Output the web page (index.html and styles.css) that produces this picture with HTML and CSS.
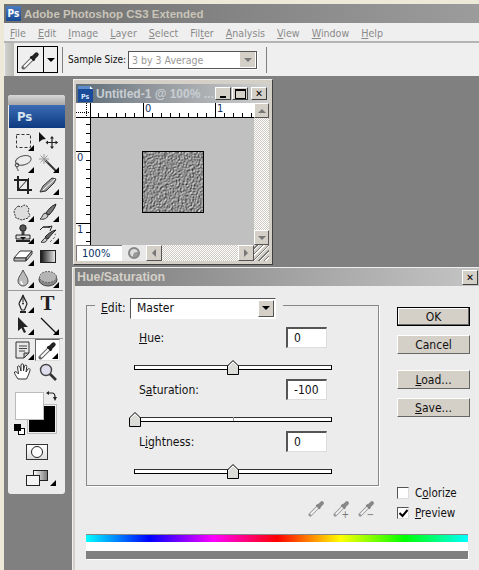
FILE: index.html
```html
<!DOCTYPE html>
<html lang="en">
<head>
<meta charset="utf-8">
<title>Adobe Photoshop CS3 Extended</title>
<link rel="stylesheet" href="styles.css">
</head>
<body>
<svg class="defs" width="0" height="0" aria-hidden="true">
  <defs>
    <symbol id="dropper" viewBox="0 0 20 20">
      <path d="M2.5 17.5L11 9" stroke="#666" stroke-width="4" stroke-linecap="round" fill="none"/>
      <path d="M3 17L11 9" stroke="#fff" stroke-width="2" fill="none"/>
      <path d="M9.5 6.5l4 4" stroke="#111" stroke-width="2.4"/>
      <path d="M12.5 7.5L15.5 4.5" stroke="#222" stroke-width="4.4" stroke-linecap="round"/>
    </symbol>
    <symbol id="dropper-gray" viewBox="0 0 20 20">
      <path d="M2.5 17.5L11 9" stroke="#999" stroke-width="4" stroke-linecap="round" fill="none"/>
      <path d="M3 17L11 9" stroke="#f6f6f6" stroke-width="2" fill="none"/>
      <path d="M9.5 6.5l4 4" stroke="#777" stroke-width="2.4"/>
      <path d="M12.5 7.5L15.5 4.5" stroke="#888" stroke-width="4.4" stroke-linecap="round"/>
    </symbol>
    <symbol id="thumb" viewBox="0 0 12 15">
      <path d="M.5 6L6 .5 11.5 6v8.5H.5z" fill="#dcdcd8" stroke="#000"/>
      <path d="M1.5 6.4L6 2l4.5 4.4" fill="none" stroke="#fff"/>
    </symbol>
  </defs>
</svg>

<div class="top-edge"></div>
<header class="titlebar">
  <span class="ps-icon">Ps</span>
  <span class="app-title">Adobe Photoshop CS3 Extended</span>
</header>
<nav class="menubar">
  <span><u>F</u>ile</span><span><u>E</u>dit</span><span><u>I</u>mage</span><span><u>L</u>ayer</span><span><u>S</u>elect</span><span>Fil<u>t</u>er</span><span><u>A</u>nalysis</span><span><u>V</u>iew</span><span><u>W</u>indow</span><span><u>H</u>elp</span>
</nav>
<div class="optionsbar">
  <div class="grip"></div>
  <div class="tool-preset">
    <span class="preset-icon"><svg width="20" height="20"><use href="#dropper"/></svg></span>
    <span class="preset-arrow"><i class="tri-down"></i></span>
  </div>
  <div class="opt-sep"></div>
  <span class="sample-label">Sample Size:</span>
  <div class="sample-select"><span class="sample-value">3 by 3 Average</span><span class="sample-btn"><i class="tri-down tri-gray"></i></span></div>
  <div class="opt-sep"></div>
</div>

<div class="desk-edge"></div>

<aside class="toolbox">
  <div class="tb-handle"></div>
  <div class="tb-logo">Ps</div>
  <div class="tb-grid">
    <div class="tool more"><svg width="20" height="20" viewBox="0 0 20 20"><rect x="3.500" y="3.500" width="14" height="13" fill="none" stroke="#333" stroke-width="1" stroke-dasharray="3 2"/></svg></div>
    <div class="tool"><svg width="20" height="20" viewBox="0 0 20 20"><path d="M0 0v10l3.500-2.500 3.500-.500z" transform="translate(1 1)" fill="#111"/><path d="M14 6v11M8.500 11.500h11" stroke="#222" stroke-width="1.200"/><path d="M14 5l-2 2.500h4zM14 18l-2-2.500h4zM7.500 11.500l2.500-2v4zM20 11.500l-2.500-2v4z" fill="#222"/></svg></div>
    <div class="tool more"><svg width="20" height="20" viewBox="0 0 20 20"><ellipse cx="10.500" cy="7.500" rx="8" ry="4.500" fill="none" stroke="#555" stroke-width="1" transform="rotate(-15 10 8)"/><circle cx="4" cy="12" r="1.800" fill="none" stroke="#444"/><path d="M4 14c-1 2 2 2 1 4" fill="none" stroke="#444"/></svg></div>
    <div class="tool more"><svg width="20" height="20" viewBox="0 0 20 20"><path d="M7 7L19 19" stroke="#333" stroke-width="2"/><path d="M6 1v10M1 6h10M2.500 2.500l7 7M9.500 2.500l-7 7" stroke="#999"/></svg></div>
    <div class="tool"><svg width="20" height="20" viewBox="0 0 20 20"><path d="M5 1v14h14M1 5h14v14" fill="none" stroke="#222" stroke-width="2"/><path d="M5 15L16 3" stroke="#222"/></svg></div>
    <div class="tool more"><svg width="20" height="20" viewBox="0 0 20 20"><path d="M2 17l3-6 9-8 4 1-2 4-8 8z" fill="#999" stroke="#333"/><path d="M5 15L17 4" stroke="#fff"/></svg></div>
    <div class="tb-sep"></div>
    <div class="tool more"><svg width="20" height="20" viewBox="0 0 20 20"><path d="M5 4l3 1 3-2 3 1 2 3-1 3 2 3-2 3-3 1-3 1-3-1-3-1-1-3-1-3 1-3z" fill="#ddd" stroke="#333" stroke-dasharray="2 1"/></svg></div>
    <div class="tool more"><svg width="20" height="20" viewBox="0 0 20 20"><path d="M18 2C13 4 10 8 8 11l3 2c3-3 6-7 7-11z" fill="#777" stroke="#222"/><path d="M7 11c-3 1-2 4-5 6 4 1 8-1 8-4z" fill="#ccc" stroke="#333"/></svg></div>
    <div class="tool more"><svg width="20" height="20" viewBox="0 0 20 20"><circle cx="10" cy="4" r="3.200" fill="#555" stroke="#222"/><path d="M8.500 7h3v4h-3z" fill="#444"/><path d="M3 11h14v4H3z" fill="#ddd" stroke="#222"/><path d="M3 17h14" stroke="#222" stroke-width="2"/><path d="M7 13h6l-3 3z" fill="#111"/></svg></div>
    <div class="tool more"><svg width="20" height="20" viewBox="0 0 20 20"><path d="M5 3h7" stroke="#222" stroke-width="1.500"/><path d="M10 3l4-1-2 5M5 3l-3 3" fill="none" stroke="#222"/><path d="M18 6C15 9 12 12 10 15l-3-2c3-3 6-6 11-7z" fill="#666" stroke="#222"/><path d="M7 14c-2 1-2 3-4 4 3 1 6 0 6-3z" fill="#ccc" stroke="#333"/><path d="M12 18l2-2M15 15l2-2M17 11l1-2" stroke="#333" stroke-dasharray="1 1"/></svg></div>
    <div class="tool more"><svg width="20" height="20" viewBox="0 0 20 20"><path d="M7 5h12l-6 7H1z" fill="#fff" stroke="#333"/><path d="M1 12h12v3H1zM13 12l6-7v3l-6 7z" fill="#bbb" stroke="#333"/></svg></div>
    <div class="tool"><svg class="grad-icon" width="16" height="13" viewBox="0 0 16 13"><defs><linearGradient id="gr"><stop offset="0" stop-color="#111"/><stop offset="1" stop-color="#eee"/></linearGradient></defs><rect x=".5" y=".5" width="15" height="12" fill="url(#gr)" stroke="#222"/></svg></div>
    <div class="tool more"><svg width="20" height="20" viewBox="0 0 20 20"><path d="M10 2c-2 5-5 7-5 11a5 5 0 0 0 10 0c0-4-3-6-5-11z" fill="#bbb" stroke="#555"/><path d="M8 13a2 3 0 0 0 2 3" stroke="#fff" stroke-width="1.500" fill="none"/></svg></div>
    <div class="tool more"><svg width="20" height="20" viewBox="0 0 20 20"><ellipse cx="10" cy="11.500" rx="9" ry="6.500" fill="#888" stroke="#444"/><ellipse cx="10" cy="9" rx="8.500" ry="5.500" fill="#b4b4b4" stroke="#666" stroke-dasharray="2 1"/></svg></div>
    <div class="tb-sep tb-sep-tight"></div>
    <div class="tool more"><svg width="20" height="20" viewBox="0 0 20 20"><path d="M10 2c-1 4-4 7-4 9l2.500 6h3L14 11c0-2-3-5-4-9z" fill="#eee" stroke="#222" stroke-width="1.200"/><path d="M10 3v6" stroke="#222"/><circle cx="10" cy="10.500" r="1" fill="#222"/><path d="M7 19h6" stroke="#222" stroke-width="2"/></svg></div>
    <div class="tool tool-type">T</div>
    <div class="tool more"><svg width="20" height="20" viewBox="0 0 20 20"><path d="M5 2v14l3.500-3 2.500 5 2-1-2.500-5H15z" fill="#222"/></svg></div>
    <div class="tool more"><svg width="20" height="20" viewBox="0 0 20 20"><path d="M3 3l15 15" stroke="#111" stroke-width="1.200"/></svg></div>
    <div class="tb-sep tb-sep-low"></div>
    <div class="tool more"><svg width="20" height="20" viewBox="0 0 20 20"><path d="M3 2h13v11l-5 5H3z" fill="#e8e8e8" stroke="#333"/><path d="M16 13h-5v5z" fill="#bbb" stroke="#333"/><path d="M6 6h8M6 8.500h8M6 11h6" stroke="#444"/></svg></div>
    <div class="tool more tool-active"><svg width="20" height="20"><use href="#dropper"/></svg></div>
    <div class="tool"><svg width="20" height="20" viewBox="0 0 20 20"><path d="M5 17C3 14 1 11 1.500 10s2.500 0 4 2L4.500 5c0-1.500 2-1.500 2.500 0l1 4V3c0-1.500 2.500-1.500 2.500 0v6l1-5c.5-1.500 2.500-1 2.300.5L13 10l2-3c1-1 2.500 0 2 1.500-1 3-2 6-3.500 8.500z" fill="#fff" stroke="#333"/></svg></div>
    <div class="tool"><svg width="20" height="20" viewBox="0 0 20 20"><circle cx="8" cy="8" r="5.500" fill="#dde" stroke="#444" stroke-width="1.400"/><path d="M12 12l6 6" stroke="#333" stroke-width="2.600"/></svg></div>
  </div>
  <div class="swatches">
    <div class="swatch-bg"></div>
    <div class="swatch-fg"></div>
    <div class="swatch-mini"><i class="mini-w"></i><i class="mini-b"></i></div>
    <svg class="swatch-swap" width="11" height="11" viewBox="0 0 11 11"><path d="M2 2h4c2 0 3 1 3 4" fill="none" stroke="#222" stroke-width="1.200"/><path d="M3 0L0 2l3 2zM7 6h4L9 10z" fill="#222"/></svg>
  </div>
  <div class="mode-btn"><i class="mode-circle"></i></div>
  <div class="screen-btn">
    <svg width="22" height="16" viewBox="0 0 22 16"><defs><linearGradient id="sc" x1="0" x2="1"><stop offset="0" stop-color="#fff"/><stop offset="1" stop-color="#777"/></linearGradient></defs><rect x="7.500" y=".5" width="14" height="10" fill="url(#sc)" stroke="#222"/><rect x=".5" y="5.500" width="13" height="10" fill="#f4f4f4" stroke="#222"/></svg>
  </div>
</aside>

<section class="docwin">
  <div class="doc-title">
    <svg class="doc-icon" width="17" height="18" viewBox="0 0 17 18"><path d="M1 1h12l3 3v13H1z" fill="#1a4a9a"/><path d="M1 1h12v3H1z" fill="#5d8ccc"/><path d="M13 1l3 3h-3z" fill="#fff"/><text x="4" y="14" class="doc-icon-text">Ps</text></svg>
    <span class="doc-name">Untitled-1 @ 100% ...</span>
    <span class="win-btn"><i class="g-min"></i></span>
    <span class="win-btn"><i class="g-max"></i></span>
    <span class="win-btn win-close">✕</span>
  </div>
  <div class="doc-grid">
    <div class="ruler-corner"></div>
    <div class="ruler-h"><span class="r-num rh0">0</span><span class="r-num rh1">1</span></div>
    <div class="scroll-btn"><i class="tri-up"></i></div>
    <div class="ruler-v"><span class="r-num rv0">0</span><span class="r-num rv1">1</span></div>
    <div class="canvas">
      <svg class="noise" width="60" height="60">
        <filter id="nz" x="0" y="0" width="100%" height="100%" color-interpolation-filters="sRGB">
          <feTurbulence type="fractalNoise" baseFrequency="0.85 0.7" numOctaves="2" seed="7" result="t"/>
          <feDiffuseLighting in="t" surfaceScale="1.300" diffuseConstant="1" lighting-color="#fff">
            <feDistantLight azimuth="225" elevation="34"/>
          </feDiffuseLighting>
        </filter>
        <rect width="60" height="60" filter="url(#nz)"/>
      </svg>
    </div>
    <div class="scroll-v-col">
      <div class="dither"></div>
      <div class="scroll-btn"><i class="tri-down tri-gray"></i></div>
    </div>
  </div>
  <div class="doc-status">
    <span class="zoom-field">100%</span>
    <span class="status-icon"><i></i></span>
    <span class="scroll-btn sb-h"><i class="tri-left"></i></span>
    <span class="dither dither-h"></span>
    <span class="scroll-btn sb-h"><i class="tri-right"></i></span>
    <span class="resize-grip"></span>
  </div>
</section>

<section class="dialog">
  <div class="dlg-title"><span class="dlg-name">Hue/Saturation</span><span class="win-btn win-close dlg-close">✕</span></div>
  <div class="dlg-body">
    <div class="dlg-main">
      <div class="dlg-left">
        <div class="group">
          <div class="legend"><span class="legend-label"><u>E</u>dit:</span>
            <div class="select"><span>Master</span><span class="select-btn"><i class="tri-down"></i></span></div>
          </div>
          <div class="adj-row"><span class="adj-label"><u>H</u>ue:</span><span class="field">0</span></div>
          <div class="slider"><div class="track"></div><svg class="thumb thumb-mid" width="12" height="15"><use href="#thumb"/></svg></div>
          <div class="adj-row"><span class="adj-label">S<u>a</u>turation:</span><span class="field">-100</span></div>
          <div class="slider"><div class="track"></div><i class="tick"></i><svg class="thumb thumb-min" width="12" height="15"><use href="#thumb"/></svg></div>
          <div class="adj-row"><span class="adj-label">L<u>i</u>ghtness:</span><span class="field">0</span></div>
          <div class="slider"><div class="track"></div><svg class="thumb thumb-mid" width="12" height="15"><use href="#thumb"/></svg></div>
        </div>
        <div class="droppers">
          <svg width="18" height="18"><use href="#dropper-gray"/></svg>
          <span class="dropper-mod"><svg width="18" height="18"><use href="#dropper-gray"/></svg><b class="mod">+</b></span>
          <span class="dropper-mod"><svg width="18" height="18"><use href="#dropper-gray"/></svg><b class="mod">−</b></span>
        </div>
      </div>
      <div class="dlg-right">
        <div class="btn btn-default">OK</div>
        <div class="btn">Cancel</div>
        <div class="btn btn-gap"><span><u>L</u>oad...</span></div>
        <div class="btn"><span><u>S</u>ave...</span></div>
        <label class="check check-first"><i class="box"></i><span>C<u>o</u>lorize</span></label>
        <label class="check"><i class="box"><svg width="11" height="11" viewBox="0 0 11 11"><path d="M1.500 5l3 3 5-6" fill="none" stroke="#000" stroke-width="2"/></svg></i><span><u>P</u>review</span></label>
      </div>
    </div>
    <div class="spectrum"></div>
    <div class="spectrum-white"></div>
    <div class="spectrum-gray"></div>
  </div>
</section>
</body>
</html>
```

FILE: styles.css
```css
* { box-sizing: border-box; }
html, body { margin: 0; padding: 0; }
body {
  position: relative;
  width: 479px;
  height: 570px;
  overflow: hidden;
  background: #808080;
  font-family: "DejaVu Sans Condensed", "DejaVu Sans", sans-serif;
  font-stretch: condensed;
  font-size: 12px;
  color: #111;
}
i { display: block; font-style: normal; }
u { text-underline-offset: 1px; }
.defs { position: absolute; }

.top-edge { height: 4px; background: #ece9d8; }
.titlebar {
  height: 19px;
  margin-left: 4px;
  display: flex;
  align-items: center;
  gap: 3px;
  background: linear-gradient(90deg, #707070 0%, #7c7c7c 30%, #9c9c9c 100%);
}
.ps-icon {
  width: 15px;
  height: 15px;
  margin-left: 2px;
  background: linear-gradient(#4c7cc0, #164a94);
  color: #fff;
  font-size: 10px;
  line-height: 15px;
  text-align: center;
  font-weight: bold;
}
.app-title {
  color: #c9c5b8;
  font-family: "Liberation Sans", sans-serif;
  font-stretch: normal;
  font-weight: bold;
  font-size: 11.500px;
}
.menubar {
  height: 20px;
  margin-left: 4px;
  padding: 1px 0 0 6px;
  display: flex;
  align-items: center;
  gap: 12px;
  background: #efefef;
  border-bottom: 2px solid #b4b4b4;
  color: #8a8a8a;
  font-size: 10.600px;
}
.optionsbar {
  height: 33px;
  margin-left: 4px;
  display: flex;
  align-items: center;
  background: #efefef;
}
.grip {
  width: 9px;
  height: 33px;
  margin-left: 1px;
  background: linear-gradient(90deg, #d0d0cc, #b8b8b4);
}
.tool-preset {
  display: flex;
  width: 41px;
  height: 27px;
  margin-left: 3px;
  border: 1px solid #000;
  background: #efefef;
}
.preset-icon { width: 26px; display: flex; align-items: center; justify-content: center; border-right: 1px solid #000; }
.preset-arrow { flex: 1; display: flex; align-items: center; justify-content: center; }
.tri-down { width: 0; height: 0; border: 4px solid transparent; border-top-color: #000; border-bottom-width: 0; }
.tri-gray { border-top-color: #777; }
.tri-up { width: 0; height: 0; border: 4px solid transparent; border-bottom-color: #777; border-top-width: 0; }
.tri-left { width: 0; height: 0; border: 4px solid transparent; border-right-color: #777; border-left-width: 0; }
.tri-right { width: 0; height: 0; border: 4px solid transparent; border-left-color: #777; border-right-width: 0; }
.opt-sep { width: 1px; height: 26px; margin-left: 4px; background: #808080; }
.sample-label { margin-left: 5px; width: 55px; font-size: 10px; color: #111; white-space: nowrap; }
.sample-select {
  display: flex;
  align-items: center;
  justify-content: space-between;
  width: 129px;
  height: 18px;
  margin-left: 5px;
  margin-right: 5px;
  padding: 0 1px 0 3px;
  background: #fff;
  border: 1px solid #555;
  box-shadow: 1px 1px 0 #fff;
  color: #999;
  font-size: 10.500px;
}
.sample-btn { width: 15px; height: 15px; background: #d4d0c8; display: flex; align-items: center; justify-content: center; }
.desk-edge { position: absolute; left: 0; top: 0; width: 4px; height: 570px; background: #ece9d8; }

/* Toolbox */
.toolbox {
  position: absolute;
  left: 8px;
  top: 95px;
  width: 57px;
  height: 399px;
  background: #ececec;
  border-radius: 3px;
}
.tb-handle { height: 10px; background: linear-gradient(#d8d8d8, #a8a8a8); border-radius: 3px 3px 0 0; }
.tb-logo {
  height: 23px;
  margin-left: 1px;
  padding-left: 8px;
  background: linear-gradient(#3a6cb4, #0e3a80);
  color: #d8e4f0;
  font-weight: bold;
  font-size: 13px;
  line-height: 23px;
}
.tb-grid {
  display: grid;
  grid-template-columns: 25px 25px;
  padding: 2px 0 0 2px;
}
.tool { position: relative; height: 22px; display: flex; align-items: center; justify-content: center; }
.tool.more::after {
  content: "";
  position: absolute;
  right: 1px;
  bottom: 1px;
  border-top: 3px solid transparent;
  border-left: 3px solid transparent;
  border-right: 3px solid #000;
  border-bottom: 3px solid #000;
}
.tb-sep { grid-column: 1 / -1; height: 1px; margin: 2px 0 2px -2px; width: 55px; background: #999; }
.tb-sep-tight { margin: 1px 0 1px -2px; }
.tb-sep-low { margin: 2px 0 0 -2px; }
.tool-type { font-family: "Liberation Serif", serif; font-stretch: normal; font-weight: bold; font-size: 21px; color: #222; }
.tool-active { background: #fff; border: 1px solid; border-color: #666 #ddd #ddd #666; }
.swatches { position: relative; height: 48px; margin-top: 9px; }
.swatch-fg { position: absolute; left: 7px; top: 0; width: 29px; height: 28px; background: #fff; border: 1px solid #bbb; }
.swatch-bg { position: absolute; left: 20px; top: 13px; width: 28px; height: 28px; background: #000; border: 1px solid #eee; outline: 1px solid #bbb; }
.swatch-mini { position: absolute; left: 6px; top: 32px; width: 11px; height: 11px; }
.mini-w { position: absolute; right: 0; bottom: 0; width: 7px; height: 7px; background: #fff; border: 1px solid #000; }
.mini-b { position: absolute; left: 0; top: 0; width: 7px; height: 7px; background: #000; }
.swatch-swap { position: absolute; left: 38px; top: -1px; }
.mode-btn {
  width: 22px;
  height: 16px;
  margin: 4px 0 0 18px;
  border: 1px solid #333;
  background: linear-gradient(#fff, #ddd);
  display: flex;
  align-items: center;
  justify-content: center;
}
.mode-circle { width: 12px; height: 12px; border-radius: 50%; border: 1px solid #222; background: #fff; }
.screen-btn { position: relative; margin: 10px 0 0 18px; width: 30px; }
.screen-btn::after {
  content: "";
  position: absolute;
  right: 0;
  bottom: 3px;
  border-top: 3px solid transparent;
  border-left: 3px solid transparent;
  border-right: 3px solid #000;
  border-bottom: 3px solid #000;
  width: 0;
}

/* Document window */
.docwin {
  position: absolute;
  left: 73px;
  top: 79px;
  width: 200px;
  height: 186px;
  padding: 4px 3px 3px 2px;
  background: #d4d0c8;
  border: 1px solid #eee;
  border-right-color: #404040;
  border-bottom-color: #404040;
}
.doc-title {
  display: flex;
  align-items: center;
  height: 19px;
  padding-right: 2px;
  background: linear-gradient(90deg, #5c6c78 0%, #8c9298 35%, #cfcfcf 100%);
}
.doc-icon { margin: 0 2px 0 1px; flex: none; }
.doc-icon-text { fill: #d8e6f8; font-size: 7px; font-weight: bold; }
.doc-name {
  flex: 1;
  color: #c8ced2;
  font-family: "Liberation Sans", sans-serif;
  font-stretch: normal;
  font-weight: bold;
  font-size: 12px;
  white-space: nowrap;
}
.win-btn {
  flex: none;
  width: 16px;
  height: 13px;
  margin-left: 1px;
  display: flex;
  align-items: center;
  justify-content: center;
  background: #d4d0c8;
  border: 1px solid;
  border-color: #fff #404040 #404040 #fff;
  font-size: 10px;
  color: #000;
  font-weight: bold;
}
.win-close { margin-left: 3px; }
.g-min { width: 6px; height: 2px; background: #000; margin-top: 7px; }
.g-max { width: 11px; height: 10px; border: 1px solid #000; border-top-width: 2px; }
.doc-grid {
  display: grid;
  grid-template-columns: 15px 163px 15px;
  grid-template-rows: 15px 127px;
}
.ruler-corner {
  background:
    repeating-linear-gradient(90deg, #000 0 1px, transparent 1px 2px) 0 9px/100% 1px no-repeat,
    repeating-linear-gradient(#000 0 1px, transparent 1px 2px) 10px 0/1px 100% no-repeat,
    #fff;
  border-right: 1px solid #000;
  border-bottom: 1px solid #000;
}
.ruler-h {
  position: relative;
  background: #fff repeating-linear-gradient(90deg, transparent 0 7px, #000 7px 8px, transparent 8px 9px) 0 100%/100% 4px no-repeat;
  border-bottom: 1px solid #000;
}
.r-num { position: absolute; color: #14305c; font-size: 11px; line-height: 11px; }
.rh0, .rh1 { top: 0; padding-left: 1px; height: 14px; border-left: 1px solid #000; }
.rh0 { left: 52px; }
.rh1 { left: 124px; }
.ruler-v {
  position: relative;
  background: #fff repeating-linear-gradient(transparent 0 6px, #000 6px 7px, transparent 7px 9px) 100% 0/4px 100% no-repeat;
  border-right: 1px solid #000;
}
.rv0, .rv1 { left: 0; width: 14px; padding-left: 1px; border-top: 1px solid #000; }
.rv0 { top: 33px; }
.rv1 { top: 105px; }
.canvas { background: #c0c0c0; display: flex; align-items: center; justify-content: center; }
.noise { display: block; box-sizing: content-box; border: 1px solid #000; }
.scroll-v-col { display: flex; flex-direction: column; }
.scroll-v-col .dither { flex: 1; }
.scroll-btn {
  display: flex;
  align-items: center;
  justify-content: center;
  height: 15px;
  background: #d4d0c8;
  border: 1px solid;
  border-color: #fff #555 #555 #fff;
}
.dither { background: repeating-conic-gradient(#fff 0 25%, #cfcbc4 0 50%) 0 0/2px 2px; }
.doc-status { display: flex; height: 16px; background: #d4d0c8; }
.zoom-field {
  width: 46px;
  background: #fff;
  border-top: 1px solid #777;
  border-left: 1px solid #777;
  padding-left: 5px;
  font-size: 11px;
  line-height: 15px;
  color: #0b2f66;
}
.status-icon { width: 24px; background: #e8e8e8; display: flex; align-items: center; justify-content: center; }
.status-icon i { width: 12px; height: 12px; border-radius: 50%; background: #999; border: 2px solid #888; box-shadow: inset 3px 3px 0 #ddd; }
.sb-h { width: 16px; height: 16px; }
.dither-h { width: 76px; height: 16px; }
.resize-grip { flex: 1; background: repeating-linear-gradient(135deg, #d4d0c8 0 2px, #777 2px 3px, #fff 3px 4px); }

/* Dialog */
.dialog {
  position: absolute;
  left: 72px;
  top: 267px;
  width: 407px;
  height: 303px;
  padding: 0 0 0 2px;
  background: #d4d0c8;
  border-top: 1px solid #eee;
  border-left: 1px solid #eee;
}
.dlg-title {
  display: flex;
  align-items: center;
  justify-content: space-between;
  height: 18px;
  padding: 0 1px 0 2px;
  background: linear-gradient(90deg, #7c7c7c, #c4c4c4);
}
.dlg-name {
  color: #d4d0c8;
  font-family: "Liberation Sans", sans-serif;
  font-stretch: normal;
  font-weight: bold;
  font-size: 12.400px;
}
.dlg-close { height: 15px; width: 16px; }
.dlg-body { height: 284px; padding: 19px 0 0 11px; background: #ececec; }
.dlg-main { display: flex; height: 229px; }
.dlg-left { width: 311px; }
.group {
  position: relative;
  width: 293px;
  height: 181px;
  padding-top: 21px;
  border: 1px solid #888;
  box-shadow: 1px 1px 0 #fff;
}
.legend {
  position: absolute;
  left: 8px;
  top: -9px;
  width: 188px;
  height: 22px;
  display: flex;
  align-items: center;
  background: #ececec;
  padding-left: 6px;
  gap: 4px;
}
.legend-label { font-size: 12px; width: 25px; }
.select {
  display: flex;
  align-items: center;
  justify-content: space-between;
  width: 146px;
  height: 21px;
  padding: 0 1px 0 6px;
  background: #fff;
  border: 1px solid;
  border-color: #555 #fff #fff #555;
  font-size: 12px;
}
.select-btn {
  display: flex;
  align-items: center;
  justify-content: center;
  width: 16px;
  height: 17px;
  background: #d4d0c8;
  border: 1px solid;
  border-color: #fff #555 #555 #fff;
}
.adj-row { display: flex; align-items: center; height: 21px; padding-left: 52px; }
.adj-label { width: 147px; font-size: 12px; }
.field {
  width: 41px;
  height: 21px;
  padding-left: 6px;
  background: #fff;
  border: 1px solid;
  border-color: #555 #ddd #ddd #555;
  border-width: 2px 1px 1px 2px;
  font-size: 12px;
  line-height: 18px;
}
.slider { position: relative; height: 31px; padding: 17px 0 0 47px; }
.track {
  width: 198px;
  height: 5px;
  background: #fff;
  border: 1px solid #000;
  border-top-color: #333;
}
.thumb { position: absolute; top: 12px; }
.thumb-mid { left: 140px; }
.thumb-min { left: 42px; }
.tick { position: absolute; left: 146px; top: 17px; width: 1px; height: 4px; background: #999; }
.droppers { display: flex; justify-content: flex-end; gap: 7px; padding: 13px 21px 0 0; }
.dropper-mod { position: relative; display: block; width: 18px; height: 18px; }
.mod { position: absolute; right: 2px; bottom: -3px; color: #777; font-size: 10px; font-weight: normal; line-height: 10px; }
.dlg-right { width: 73px; padding-top: 2px; }
.btn {
  display: flex;
  align-items: center;
  justify-content: center;
  height: 19px;
  margin-bottom: 9px;
  background: #d4d0c8;
  border: 1px solid;
  border-color: #fff #666 #666 #fff;
  font-size: 12px;
}
.btn-default { border: 1px solid #000; box-shadow: inset -1px -1px 0 #666, inset 1px 1px 0 #fff; }
.btn-gap { margin-top: 16px; }
.check { display: flex; align-items: center; gap: 6px; height: 13px; font-size: 11.500px; margin-bottom: 7px; white-space: nowrap; }
.check-first { margin-top: 69px; }
.box {
  width: 12px;
  height: 12px;
  background: #fff;
  border: 1px solid;
  border-color: #555 #ddd #ddd #555;
}
.box svg { display: block; }
.spectrum {
  width: 382px;
  height: 8px;
  border-top: 1px solid #888;
  background: linear-gradient(90deg, #0ff, #00f, #f0f, #f00, #ff0, #0f0, #0ff);
}
.spectrum-white { width: 382px; height: 9px; background: #fff; }
.spectrum-gray { width: 382px; height: 8px; background: #808080; box-shadow: 1px 1px 0 #fff; }
```
